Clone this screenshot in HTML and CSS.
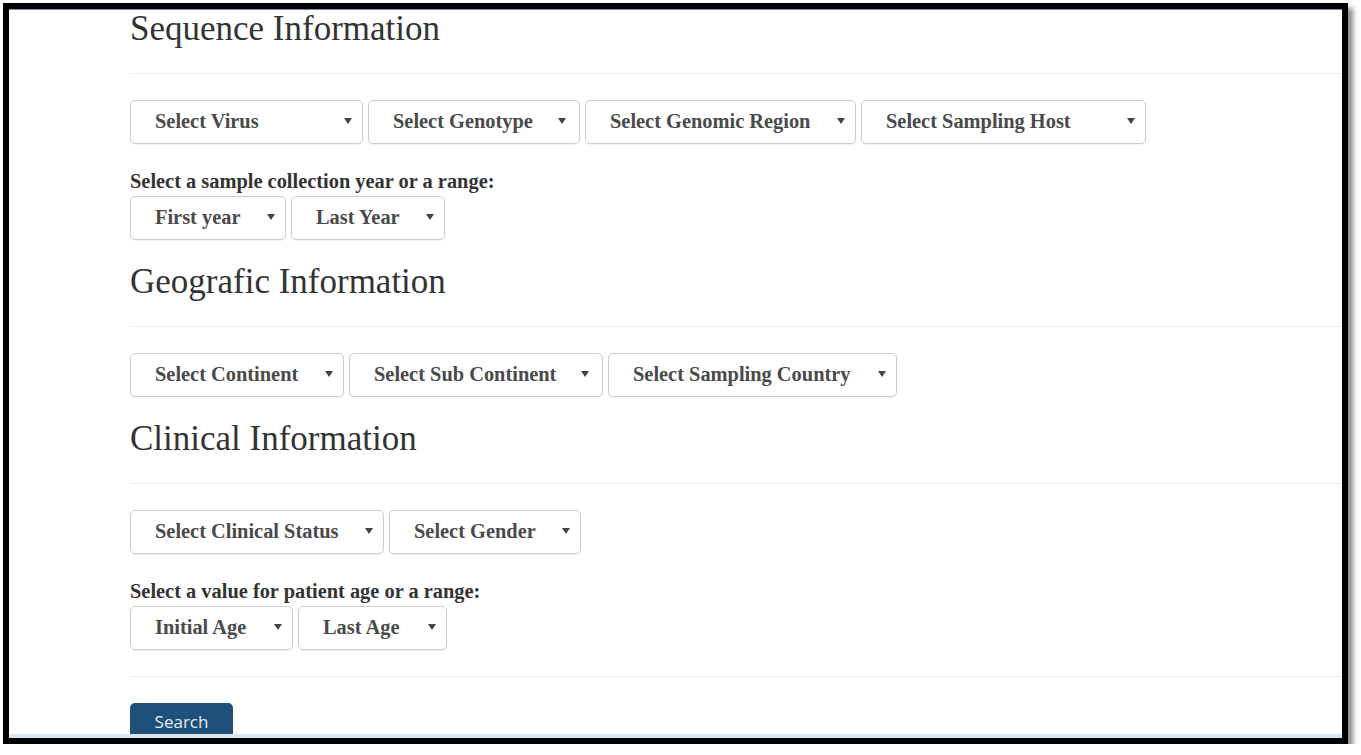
FILE: index.html
```html
<!DOCTYPE html>
<html lang="en">
<head>
<meta charset="utf-8">
<title>Search sequences</title>
<link rel="stylesheet" href="styles.css">
</head>
<body>
<div class="frame">
  <div class="page">
    <h3 class="section-title">Sequence Information</h3>
    <div class="rule"></div>
    <div class="select-row">
      <div class="select sel-virus">Select Virus</div>
      <div class="select sel-genotype">Select Genotype</div>
      <div class="select sel-region">Select Genomic Region</div>
      <div class="select sel-host">Select Sampling Host</div>
    </div>
    <div class="field-label">Select a sample collection year or a range:</div>
    <div class="select-row">
      <div class="select sel-first-year">First year</div>
      <div class="select sel-last-year">Last Year</div>
    </div>

    <h3 class="section-title spaced">Geografic Information</h3>
    <div class="rule"></div>
    <div class="select-row">
      <div class="select sel-continent">Select Continent</div>
      <div class="select sel-subcontinent">Select Sub Continent</div>
      <div class="select sel-country">Select Sampling Country</div>
    </div>

    <h3 class="section-title spaced">Clinical Information</h3>
    <div class="rule"></div>
    <div class="select-row">
      <div class="select sel-status">Select Clinical Status</div>
      <div class="select sel-gender">Select Gender</div>
    </div>
    <div class="field-label">Select a value for patient age or a range:</div>
    <div class="select-row">
      <div class="select sel-initial-age">Initial Age</div>
      <div class="select sel-last-age">Last Age</div>
    </div>
    <div class="rule rule-bottom"></div>
    <button class="search-btn" type="button">Search</button>
  </div>
  <div class="status-strip"></div>
</div>
</body>
</html>
```

FILE: styles.css
```css
html, body {
  margin: 0;
  padding: 0;
  background: #ffffff;
}

body {
  font-family: "Liberation Serif", "Times New Roman", serif;
  color: #333333;
}

.frame {
  box-sizing: border-box;
  width: 1345px;
  height: 741px;
  margin: 3px 0 0 3px;
  border: 6px solid #000000;
  background: #ffffff;
  box-shadow: 5px 5px 5px rgba(0, 0, 0, 0.45);
  display: flex;
  flex-direction: column;
}

.page {
  flex: 1;
  min-height: 0;
  overflow: hidden;
  padding-left: 121px;
  box-shadow: inset 0 1px 0 #6f8ca2;
}

.status-strip {
  height: 4px;
  background: #dbe6f1;
}

.section-title {
  margin: 0;
  font-size: 35px;
  line-height: 40px;
  font-weight: normal;
  color: #333333;
}

.section-title.spaced {
  margin-top: 22px;
}

.rule {
  border-top: 1px solid #ececec;
  margin: 24px 0 26px;
}

.rule.rule-bottom {
  margin-top: 26px;
}

.select-row {
  display: flex;
  gap: 5px;
}

.select {
  box-sizing: border-box;
  height: 44px;
  display: flex;
  align-items: center;
  justify-content: space-between;
  padding: 0 10px 2px 24px;
  border: 1px solid #cccccc;
  border-radius: 5px;
  box-shadow: 0 1px 1px rgba(0, 0, 0, 0.06);
  font-size: 20.4px;
  line-height: 22px;
  font-weight: bold;
  color: #4a4a4a;
  white-space: nowrap;
}

.select::after {
  content: "";
  width: 0;
  height: 0;
  border-left: 4px solid transparent;
  border-right: 4px solid transparent;
  border-top: 6px solid #444444;
}

.sel-virus { width: 233px; }
.sel-genotype { width: 212px; }
.sel-region { width: 271px; }
.sel-host { width: 285px; }
.sel-first-year { width: 156px; }
.sel-last-year { width: 154px; }
.sel-continent { width: 214px; }
.sel-subcontinent { width: 254px; }
.sel-country { width: 289px; }
.sel-status { width: 254px; }
.sel-gender { width: 192px; }
.sel-initial-age { width: 163px; }
.sel-last-age { width: 149px; }

.sel-genotype, .sel-subcontinent { padding-right: 13px; }

.field-label {
  margin: 26px 0 4px;
  font-size: 20.4px;
  line-height: 22px;
  font-weight: bold;
  color: #333333;
}

.search-btn {
  display: block;
  width: 103px;
  padding: 8px 0;
  border: none;
  border-radius: 5px;
  background: #1f5079;
  color: #e4edf5;
  font-family: "Open Sans", "Liberation Sans", sans-serif;
  font-size: 17px;
  line-height: 22px;
  text-align: center;
}
```
